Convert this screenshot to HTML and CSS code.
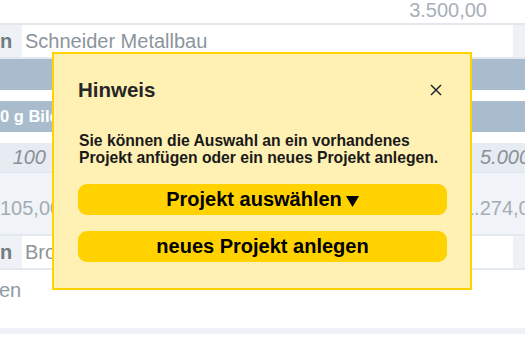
FILE: index.html
```html
<!DOCTYPE html>
<html lang="de">
<head>
<meta charset="utf-8">
<title>Hinweis</title>
<link rel="stylesheet" href="styles.css">
</head>
<body>
<div class="page">
  <div class="top-row"><span class="amount">3.500,00</span></div>
  <div class="sep"></div>
  <div class="field-row">
    <div class="label">n</div>
    <div class="input">Schneider Metallbau</div>
    <div class="tail"></div>
  </div>
  <div class="sep"></div>
  <div class="bar"></div>
  <div class="space"></div>
  <div class="bar bar-text">0 g Bild</div>
  <div class="space"></div>
  <div class="data-row row-a">
    <div class="num italic left-num">100</div>
    <div class="num italic">5.000,00</div>
  </div>
  <div class="thin-sep"></div>
  <div class="data-row row-b">
    <div class="num left-num">105,00</div>
    <div class="num">1.274,00</div>
  </div>
  <div class="sep"></div>
  <div class="field-row">
    <div class="label">n</div>
    <div class="input">Brose GmbH</div>
    <div class="tail"></div>
  </div>
  <div class="sep"></div>
  <div class="plain-row">en</div>
  <div class="bottom-band"></div>

  <div class="modal">
    <div class="modal-head">
      <div class="modal-title">Hinweis</div>
      <div class="close" aria-label="schließen">
        <svg width="12" height="12" viewBox="0 0 12 12"><path d="M1 1 L11 11 M11 1 L1 11" stroke="#1f2a2e" stroke-width="1.5" fill="none"/></svg>
      </div>
    </div>
    <p class="modal-text">Sie können die Auswahl an ein vorhandenes Projekt anfügen oder ein neues Projekt anlegen.</p>
    <div class="btn">Projekt auswählen<svg class="caret" width="13" height="11" viewBox="0 0 13 11"><path d="M0 0 H13 L6.5 11 Z" fill="#000"/></svg></div>
    <div class="btn btn-second">neues Projekt anlegen</div>
  </div>
</div>
</body>
</html>
```
FILE: styles.css
```css
html, body {
  margin: 0;
  padding: 0;
  background: #ffffff;
}
body {
  width: 525px;
  height: 342px;
  overflow: hidden;
  font-family: "Liberation Sans", Arial, sans-serif;
}
.page {
  position: relative;
  width: 525px;
  height: 342px;
  overflow: hidden;
}
.top-row {
  height: 23px;
  display: flex;
  justify-content: flex-end;
  padding-right: 38px;
  font-size: 20px;
  line-height: 20px;
  color: #a8b0b8;
}
.sep {
  height: 2px;
  background: #e2e8ee;
}
.thin-sep {
  height: 1px;
  background: #dce3ea;
}
.field-row {
  display: grid;
  grid-template-columns: 22px 491px 1fr;
  height: 32px;
  background: #eef2f6;
  font-size: 20px;
  line-height: 32px;
  white-space: nowrap;
  overflow: hidden;
}
.label {
  font-weight: bold;
  color: #727a82;
  overflow: hidden;
}
.input {
  background: #ffffff;
  color: #8c949c;
  padding-left: 3px;
  overflow: hidden;
}
.bar {
  height: 31px;
  background: #a8bccd;
}
.bar-text {
  color: #ffffff;
  font-weight: bold;
  font-size: 16.5px;
  line-height: 31px;
  white-space: nowrap;
}
.space {
  height: 11px;
}
.data-row {
  display: grid;
  grid-template-columns: 48px 415px 1fr;
  white-space: nowrap;
  overflow: hidden;
  font-size: 20px;
}
.row-a {
  height: 29px;
  line-height: 29px;
  background: #e6ecf2;
  color: #8a9096;
}
.row-a .num:last-child {
  grid-column: 3;
  padding-left: 17px;
}
.row-b {
  height: 61px;
  background: #f0f4f8;
  color: #a4acb4;
  line-height: 22px;
}
.row-b .num {
  padding-top: 24px;
}
.row-b .num:last-child {
  grid-column: 3;
}
.italic {
  font-style: italic;
}
.left-num {
  text-align: right;
  padding-right: 2px;
}
.row-b .left-num {
  text-align: left;
}
.plain-row {
  height: 58px;
  font-size: 20px;
  line-height: 22px;
  padding-top: 9px;
  box-sizing: border-box;
  color: #8d9aa6;
  margin-left: -1px;
}
.bottom-band {
  height: 6px;
  background: #eef2f6;
}

/* modal overlay */
.modal {
  position: absolute;
  left: 52px;
  top: 52px;
  width: 420px;
  height: 238px;
  box-sizing: border-box;
  border: 2px solid #ffd300;
  background: #fff0b3;
  padding: 24px 23px 25px 24px;
  display: flex;
  flex-direction: column;
}
.modal-head {
  display: flex;
  align-items: center;
  justify-content: space-between;
  height: 24px;
}
.modal-title {
  font-size: 20.5px;
  line-height: 24px;
  font-weight: bold;
  color: #262626;
}
.close {
  width: 12px;
  height: 12px;
  margin-right: 5px;
  display: flex;
}
.modal-text {
  margin: 30px 0 0 1px;
  font-size: 15.7px;
  line-height: 17px;
  font-weight: bold;
  color: #1a1a1a;
}
.btn {
  margin-top: 18px;
  height: 31px;
  border-radius: 9px;
  background: #ffd200;
  color: #000000;
  font-size: 20px;
  line-height: 31px;
  font-weight: bold;
  text-align: center;
  white-space: nowrap;
}
.btn-second {
  margin-top: 16px;
}
.caret {
  margin-left: 4px;
  vertical-align: -1px;
}
```
